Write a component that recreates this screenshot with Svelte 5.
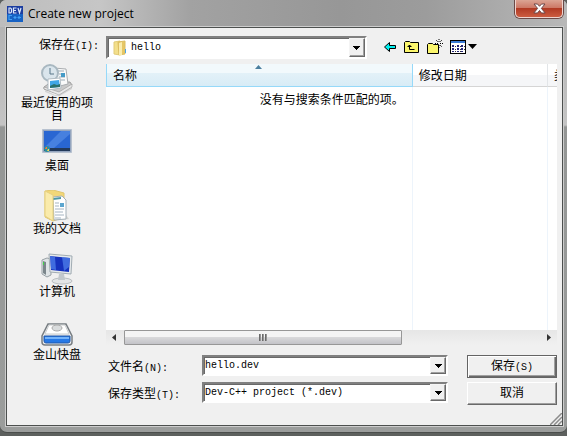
<script>
	// VARIABLES

	let fileName = $state("hello.dev");
	let folder = $state("hello");
	let fileType = $state("dev");
	let selectedPlace = $state("");

	const places = [
		{ id: "recent", label: "最近使用的项目" },
		{ id: "desktop", label: "桌面" },
		{ id: "documents", label: "我的文档" },
		{ id: "computer", label: "计算机" },
		{ id: "kuaipan", label: "金山快盘" },
	];

	// FUNCTIONS

	function choosePlace(id) {
		selectedPlace = id;
	}

	function save(event) {
		event.preventDefault();
	}
</script>

{#snippet arrow()}
	<svg width="7" height="4" viewBox="0 0 7 4" shape-rendering="crispEdges"><path d="M0 0h7v1h-1v1h-1v1h-1v1h-1v-1h-1v-1h-1v-1h-1z" /></svg>
{/snippet}

<main class="window">
	<header class="titlebar">
		<svg class="app-icon" width="16" height="16" viewBox="0 0 16 16">
			<rect width="16" height="16" fill="#1762c4" />
			<rect width="16" height="8" fill="#1c3da0" />
			<path d="M2 2v5h1.500l1-1v-3l-1-1zM9.500 2h-3v5h3M6.500 4.500h2.500M11 2l1.500 5 1.500-5" fill="none" stroke="#dce8fa" stroke-width="1.200" />
			<path d="M5 9.500h-3v4h3M6.500 11.500h3M8 10v3M10.500 11.500h3.500M12 10v3" fill="none" stroke="#42a0f4" stroke-width="1.200" />
		</svg>
		<h1>Create new project</h1>
		<button class="close" aria-label="Close">
			<svg width="13" height="11" viewBox="0 0 13 11"><path d="M1 1h3.500l2 2.300 2-2.300h3.500l-3.600 4.400 3.800 4.600h-3.700l-2-2.500-2 2.500h-3.700l3.800-4.600z" fill="#fff" stroke="#6d4748" /></svg>
		</button>
	</header>

	<form class="client" onsubmit={save}>
		<div class="look-in">
			<label for="folder">保存在<span class="latin">(I):</span></label>
			<div class="combo tall">
				<svg class="folder-icon" width="14" height="16" viewBox="0 0 14 16">
					<path d="M1 2l6-1v14l-6-1z" fill="#f3df8b" stroke="#e2cb78" />
					<path d="M5 2l7-1v13l-6 1z" fill="#e6c765" stroke="#dbbd62" />
					<path d="M6 3l3-1v13l-3 1z" fill="#faedb0" />
					<path d="M12.500 9v4" stroke="#4aa3e8" />
				</svg>
				<select id="folder" bind:value={folder}>
					<option value="hello">hello</option>
				</select>
				<span class="drop">{@render arrow()}</span>
			</div>
			<div class="tools">
				<button type="button" aria-label="Back">
					<svg width="14" height="12" viewBox="0 0 14 12"><path d="M1.500 6l5-4.500v3h6v3h-6v3z" fill="#00f0f0" stroke="#000" /></svg>
				</button>
				<button type="button" aria-label="Up one level">
					<svg width="16" height="14" viewBox="0 0 16 14">
						<path d="M.5 12.500v-10l1-1h4l1 1h8v10z" fill="#fbf66d" stroke="#000" />
						<path d="M5.500 5v4.500h5M3.500 6.500h4M4.500 5.500h2" fill="none" stroke="#000" />
					</svg>
				</button>
				<button type="button" aria-label="New folder">
					<svg width="16" height="16" viewBox="0 0 16 16">
						<path d="M.5 14.500v-9l1-1h4l1 1h5v9z" fill="#fbf66d" stroke="#000" />
						<path d="M12 0v3M12 6v3M8 4.500h3M13 4.500h3M9 1l2 2M15 1l-2 2M13 6l2 2" stroke="#000" stroke-dasharray="1 1" />
					</svg>
				</button>
				<button type="button" class="view" aria-label="View menu">
					<svg width="16" height="14" viewBox="0 0 16 14" shape-rendering="crispEdges">
						<path d="M.5 .5h15v13h-15z" fill="#fff" stroke="#000" />
						<path d="M1 1h14v2h-14z" fill="#3a7bd5" />
						<path d="M2 5h2v2h-2zM7 5h2v2h-2zM11 5h2v2h-2zM2 8h2v2h-2zM7 8h2v2h-2zM11 8h2v2h-2zM2 11h2v1h-2zM7 11h2v1h-2zM11 11h2v1h-2z" fill="#24247a" />
						<path d="M5 6h1M10 6h1M14 6h1M5 9h1M10 9h1M14 9h1M5 11h1M10 11h1" stroke="#333" />
					</svg>
					<svg width="9" height="5" viewBox="0 0 9 5"><path d="M0 0h9l-4.500 5z" /></svg>
				</button>
			</div>
		</div>

		<nav class="places">
			{#each places as place (place.id)}
				<button type="button" aria-pressed={selectedPlace === place.id} onclick={() => choosePlace(place.id)}>
					<svg width="32" height="32" viewBox="0 0 32 32">
						{#if place.id === "recent"}
							<path d="M4 26l10 5h4l13-9v3l-12 7h-5l-10-4z" fill="#d5d5d5" />
							<path d="M3 23l7-5h19l2 3-13 9-15-5z" fill="#c9c9c9" stroke="#858585" stroke-width=".7" />
							<path d="M3 23l15 5 13-8v3l-13 8-15-6z" fill="#e9e9e9" stroke="#8d8d8d" stroke-width=".5" />
							<path d="M13 4l12 1 2 15-12 3z" fill="#fafafa" stroke="#a9adb0" />
							<path d="M17 7h6M18 10h3M18 13h6M18 16h6" stroke="#9babb6" />
							<path d="M20 9h4v4h-4z" fill="#459bc7" />
							<circle cx="9" cy="9" r="8" fill="#dae5ec" stroke="#a9b8c1" stroke-width="2" />
							<path d="M9 4v6h4" fill="none" stroke="#597789" />
							<path d="M7 15l12-1 1 10-13 2z" fill="#fff" stroke="#b0bcc4" />
							<path d="M9 17l9-1 1 7-10 1z" fill="#3fa6e6" />
							<path d="M9 22l4-2 3 1 3-1v3l-10 1z" fill="#2b716c" />
						{:else if place.id === "desktop"}
							<path d="M1.500 2.500h29v23h-29z" fill="#94a5bf" stroke="#b7c1cf" />
							<path d="M3 4h26v19h-26z" fill="#2966d2" />
							<path d="M3 21l17-17h9v3l-16 14z" fill="#6599ec" opacity=".5" />
							<path d="M3 21h26v3h-26z" fill="#23395a" />
							<circle cx="6" cy="22" r="3" fill="#2b8e9d" />
							<path d="M5 20h1v2h-2z" fill="#f47a3d" />
							<path d="M7 22h1v2h-2z" fill="#f6d756" />
						{:else if place.id === "documents"}
							<path d="M10 31l18-2-3-4z" fill="#d4d4d1" />
							<path d="M4 1l8-1 11 3v24l-11 4-8-4z" fill="#f2d778" stroke="#e0c66e" />
							<path d="M12 7l9-1 4 4v19l-12 1z" fill="#fff" stroke="#a4b0b8" />
							<path d="M12 8l8-1v2l-8 1z" fill="#4e98a4" />
							<path d="M14 13h4M14 16h4M14 19h9M14 22h8M14 25h9M14 28h6" stroke="#a5b4c1" />
							<path d="M19 13h4v4h-4z" fill="#5ca6cf" />
							<path d="M4 1l8 4v26l-8-5z" fill="#faebab" stroke="#e6d07f" />
						{:else if place.id === "computer"}
							<ellipse cx="21" cy="28" rx="10" ry="3" fill="#e3e5e6" stroke="#b9bec1" />
							<path d="M1 7l5-2 4 1v16l-4 2-5-3z" fill="#dfe4e6" stroke="#99a1a6" />
							<path d="M2 8l3 1v13l-3-2z" fill="#7b868b" />
							<path d="M2 9h1v3h-1z" fill="#3fd347" />
							<path d="M18 21h5l1 6h-7z" fill="#c2c8cc" />
							<path d="M8 1l23 2-1 18-21-2z" fill="#e6eaec" stroke="#a1acb3" />
							<path d="M9 3l20 2-1 14-18-2z" fill="#1632bd" />
							<path d="M9 3l5 1 1 13-5-1zM21 4l8 1-1 9-5 4z" fill="#5285ee" opacity=".7" />
						{:else}
							<path d="M7 8h18l6 12v6q0 3-3 3h-24q-3 0-3-3v-6z" fill="#eff0f1" stroke="#777d82" stroke-width="1.500" />
							<path d="M8 9h16l4 9h-24z" fill="#fff" stroke="#c9cccd" />
							<ellipse cx="16" cy="12" rx="5" ry="3" fill="#d9dcdd" stroke="#aaa" />
							<path d="M3 20h26v5q0 2-2 2h-22q-2 0-2-2z" fill="#2679e7" stroke="#2359a6" />
							<path d="M4 21h24v2h-24z" fill="#74b3fa" />
						{/if}
					</svg>
					<span>{place.label}</span>
				</button>
			{/each}
		</nav>

		<section class="files">
			<table>
				<thead>
					<tr>
						<th class="name" aria-sort="ascending">
							名称
							<svg class="sort" width="7" height="4" viewBox="0 0 7 4"><path d="M0 4l3.500-4 3.500 4z" fill="#4b7f9f" /></svg>
						</th>
						<th class="date">修改日期</th>
						<th class="type">类型</th>
					</tr>
				</thead>
				<tbody>
					<tr>
						<td><p>没有与搜索条件匹配的项。</p></td>
						<td></td>
						<td></td>
					</tr>
				</tbody>
			</table>
			<div class="scrollbar">
				<svg width="18" height="9" viewBox="0 0 18 9"><path d="M10 1v7l-4-3.500z" fill="#333" /></svg>
				<div class="track">
					<div class="thumb"><i></i><i></i><i></i></div>
				</div>
				<svg width="18" height="9" viewBox="0 0 18 9"><path d="M8 1v7l4-3.500z" fill="#333" /></svg>
			</div>
		</section>

		<div class="fields">
			<label for="file-name">文件名<span class="latin">(N):</span></label>
			<div class="combo">
				<input id="file-name" type="text" bind:value={fileName} />
				<button type="button" class="drop" aria-label="Recent names">{@render arrow()}</button>
			</div>
			<button type="submit" class="push default">保存<span class="latin">(S)</span></button>

			<label for="file-type">保存类型<span class="latin">(T):</span></label>
			<div class="combo">
				<select id="file-type" bind:value={fileType}>
					<option value="dev">Dev-C++ project (*.dev)</option>
				</select>
				<span class="drop">{@render arrow()}</span>
			</div>
			<button type="button" class="push">取消</button>
		</div>

		<svg class="grip" width="12" height="12" viewBox="0 0 12 12">
			<path d="M0 12l12-12M4 12l8-8M8 12l4-4" stroke="#8c8c8c" stroke-width="1.500" />
		</svg>
	</form>
</main>

<style>
	:global(body) {
		margin: 0;
		background: #5d605e;
	}

	.window {
		box-sizing: border-box;
		padding: 0 4px 6px 6px;
		border-bottom: 1px solid #4b4e4c;
		border-radius: 6px 6px 7px 7px;
		background: linear-gradient(#b0b0b0, #c4c4c4 125px, #949695 127px, #9b9d9c);
		font: 12px/13px "Liberation Sans", "Noto Sans CJK SC", sans-serif;
		color: #000;
	}

	button,
	input,
	select {
		font: inherit;
		color: inherit;
		border: 0;
		padding: 0;
		background: none;
	}

	svg {
		display: block;
		flex: none;
	}

	.latin,
	.combo input,
	.combo select {
		font-family: "Liberation Mono", monospace;
		font-size: 10px;
	}

	/* title bar */

	.titlebar {
		display: flex;
		align-items: center;
		gap: 5px;
		height: 27px;
		margin: 0 -4px 0 -6px;
		padding: 0 4px 0 7px;
		border-radius: 6px 6px 0 0;
		background: linear-gradient(90deg, #bdbdbd, #c6c6c6 100px, #a2a2a2 190px, #979797 60%, #9c9c9c 75%, #b8b8b8);
	}

	h1 {
		flex: 1;
		margin: 0;
		font: 12px/16px "Open Sans", sans-serif;
	}

	.close {
		display: grid;
		place-items: center;
		align-self: flex-start;
		width: 48px;
		height: 18px;
		border: 1px solid #efd5cf;
		border-top: 0;
		border-radius: 0 0 5px 5px;
		background: linear-gradient(#dba494, #cd7967 45%, #b13a24 50%, #cc5c40);
		box-shadow: 0 0 0 1px #6b4a48;
	}

	/* client area */

	.client {
		position: relative;
		display: grid;
		grid-template-columns: 98px 1fr;
		border: 1px solid #4d504f;
		padding: 8px 5px 20px 1px;
		background: #f0f0f0;
		box-shadow: 0 0 0 1px #cdcdcd;
	}

	.look-in {
		grid-column: 1 / -1;
		display: grid;
		grid-template-columns: 98px 260fr 190fr;
		align-items: center;
		margin-bottom: 5px;
	}

	.look-in label {
		padding-left: 31px;
		margin-bottom: 4px;
	}

	.combo {
		box-sizing: border-box;
		display: grid;
		grid-template-columns: 1fr 16px;
		height: 21px;
		border: 2px solid;
		border-color: #808080 #fff #fff #808080;
		background: #fff;
		box-shadow: inset 1px 1px #696969;
	}

	.combo.tall {
		grid-template-columns: 22px 1fr 16px;
		align-items: center;
		height: 23px;
	}

	.folder-icon {
		margin-left: 5px;
	}

	.combo input,
	.combo select {
		appearance: none;
		min-width: 0;
		width: 100%;
		padding: 0 1px;
		outline: 0;
	}

	.drop {
		box-sizing: border-box;
		display: grid;
		place-items: center;
		align-self: stretch;
		border: 1px solid;
		border-color: #f4f4f4 #696969 #696969 #f4f4f4;
		background: #f0f0f0;
		box-shadow: inset -1px -1px #a0a0a0;
	}

	.tools {
		display: flex;
		align-items: center;
		gap: 7px;
		padding-left: 16px;
		margin-bottom: 2px;
	}

	.view {
		display: flex;
		align-items: center;
		gap: 2px;
	}

	/* places bar */

	.places {
		grid-row: 2 / 4;
	}

	.places button {
		display: flex;
		flex-direction: column;
		align-items: center;
		gap: 1px;
		width: 100%;
		min-height: 63px;
	}

	.places span {
		width: 76px;
	}

	/* file list */

	.files {
		display: flex;
		flex-direction: column;
		min-width: 0;
		height: 281px;
		background: #fff;
	}

	table {
		flex: 1;
		display: flex;
		flex-direction: column;
		overflow: hidden;
	}

	thead {
		display: block;
	}

	tbody {
		flex: 1;
		display: grid;
	}

	tr {
		display: grid;
		grid-template-columns: 306fr 135fr 9fr;
	}

	th,
	td {
		min-width: 0;
	}

	th {
		box-sizing: border-box;
		position: relative;
		height: 23px;
		padding: 0 6px;
		overflow: hidden;
		border-right: 1px solid #e2e5e8;
		border-bottom: 1px solid #d5d5d5;
		background: linear-gradient(#fff 50%, #f5f6f8 50%);
		font-weight: normal;
		line-height: 24px;
		text-align: left;
		white-space: nowrap;
	}

	th.name {
		border: solid #96d9f9;
		border-width: 0 1px 1px;
		background: linear-gradient(#f2f9fc 40%, #e3f1f8 40%, #d8ecf6);
	}

	th.type {
		padding-right: 0;
		border-right: 0;
	}

	.sort {
		position: absolute;
		top: 1px;
		left: 50%;
		margin-left: -4px;
	}

	td {
		padding: 0;
		border-right: 1px solid #edf4fb;
	}

	td:last-child {
		border-right: 0;
	}

	td p {
		margin: 7px 8px 0 0;
		text-align: right;
	}

	.scrollbar {
		display: flex;
		align-items: center;
		height: 15px;
		background: linear-gradient(#e6e6e6, #f0f0f0);
	}

	.track {
		flex: 1;
	}

	.thumb {
		box-sizing: border-box;
		display: flex;
		align-items: center;
		justify-content: center;
		gap: 1px;
		width: 67%;
		height: 15px;
		border: 1px solid #979797;
		border-radius: 1px;
		background: linear-gradient(#f4f4f4 45%, #d8d8da 50%, #c3c3c8);
	}

	.thumb i {
		width: 2px;
		height: 7px;
		background: linear-gradient(90deg, #555, #aaa);
	}

	/* name, type and buttons */

	.fields {
		grid-column: 2;
		display: grid;
		grid-template-columns: 96px 1fr 90px;
		align-items: start;
		row-gap: 4px;
		padding-top: 10px;
	}

	.fields label {
		padding: 6px 0 0 2px;
	}

	.fields .combo {
		margin-right: 19px;
	}

	.push {
		box-sizing: border-box;
		height: 23px;
		border: 1px solid;
		border-color: #fff #696969 #696969 #fff;
		background: #f0f0f0;
		box-shadow: inset -1px -1px #a0a0a0;
	}

	.push.default {
		border-color: #646464;
		box-shadow: inset 1px 1px #fff, inset -1px -1px #696969, inset -2px -2px #a0a0a0;
	}

	.grip {
		position: absolute;
		right: 0;
		bottom: 0;
	}
</style>
